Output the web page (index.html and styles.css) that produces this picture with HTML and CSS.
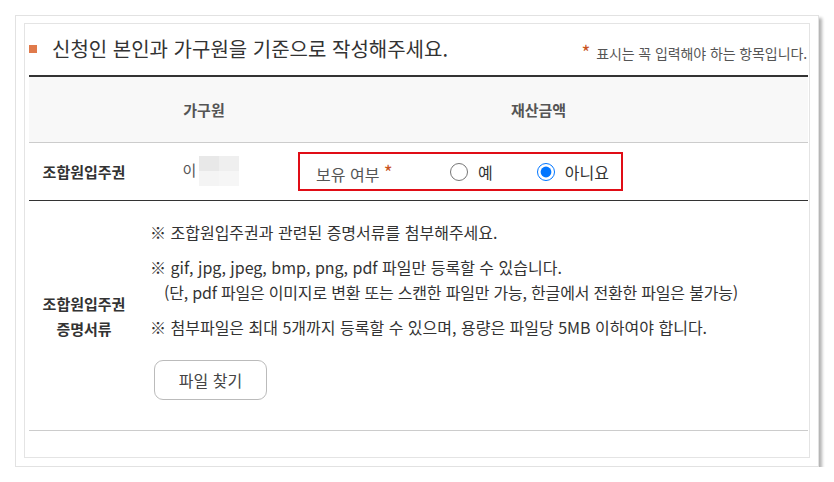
FILE: index.html
```html
<!DOCTYPE html>
<html lang="ko">
<head>
  <meta charset="UTF-8" />
  <title>조합원입주권</title>
  <link rel="stylesheet" href="styles.css">
</head>
<body>
  <div class="frame">
    <div class="panel">
      <div class="title-bar">
        <h2 class="title"><span class="bullet"></span>신청인 본인과 가구원을 기준으로 작성해주세요.</h2>
        <p class="note"><span class="star">*</span> 표시는 꼭 입력해야 하는 항목입니다.</p>
      </div>

      <table class="asset-table">
        <thead>
          <tr>
            <th class="col-label"></th>
            <th class="col-member">가구원</th>
            <th>재산금액</th>
          </tr>
        </thead>
        <tbody>
          <tr class="row-own">
            <th class="row-label">조합원입주권</th>
            <td class="member">이<span class="mosaic"><i></i><i></i><i></i><i></i></span></td>
            <td>
              <div class="own-box">
                <span class="own-label">보유 여부 <span class="star">*</span></span>
                <label class="radio"><input type="radio" name="own"> 예</label>
                <label class="radio"><input type="radio" name="own" checked> 아니요</label>
              </div>
            </td>
          </tr>
          <tr class="row-doc">
            <th class="row-label">조합원입주권<br>증명서류</th>
            <td colspan="2" class="doc">
              <p>※ 조합원입주권과 관련된 증명서류를 첨부해주세요.</p>
              <p>※ gif, jpg, jpeg, bmp, png, pdf 파일만 등록할 수 있습니다.<br><span class="indent">(단, pdf 파일은 이미지로 변환 또는 스캔한 파일만 가능, 한글에서 전환한 파일은 불가능)</span></p>
              <p>※ 첨부파일은 최대 5개까지 등록할 수 있으며, 용량은 파일당 5MB 이하여야 합니다.</p>
              <button type="button" class="file-btn">파일 찾기</button>
            </td>
          </tr>
        </tbody>
      </table>
    </div>
  </div>
</body>
</html>
```

FILE: styles.css
```css
body {
  margin: 0;
  background: #fff;
  font-family: "Noto Sans CJK KR", "Noto Sans", sans-serif;
  color: #333;
}

.frame {
  margin: 15px 0 0 15px;
  width: 786px;
  height: 435px;
  padding: 7px 8px 8px 8px;
  border: 1px solid #e2e2e2;
  box-shadow: 3px 3px 3px rgba(0,0,0,0.3);
  background: #fff;
}

.panel {
  height: 433px;
  border: 1px solid #e4e4e4;
  padding: 0 1px 0 4px;
}

.title-bar {
  display: flex;
  justify-content: space-between;
  align-items: flex-end;
  height: 51px;
}

.title {
  margin: 0 0 13px 0;
  display: flex;
  align-items: center;
  font-size: 20px;
  font-weight: 400;
  color: #333;
  line-height: 26px;
}

.bullet {
  display: inline-block;
  width: 8px;
  height: 8px;
  background: #e07a4b;
  margin-right: 15px;
}

.note {
  margin: 0 1px 12px 0;
  font-size: 14px;
  letter-spacing: -0.1px;
  color: #555;
  line-height: 20px;
}

.note .star {
  font-size: 19px;
  vertical-align: -1px;
  margin-right: 2px;
}

.star {
  color: #c9531e;
  font-size: 16px;
}

.asset-table {
  width: 100%;
  border-collapse: collapse;
  border-top: 2px solid #333;
  font-size: 15px;
}

.asset-table thead th {
  height: 65px;
  background: #f8f8f8;
  font-weight: 700;
  color: #555;
  border-bottom: 1px solid #ccc;
  padding: 0;
}

.col-label {
  width: 110px;
}

.col-member {
  width: 130px;
}

.row-own th, .row-own td {
  height: 57px;
  padding: 0;
  border-bottom: 1px solid #333;
}

.row-label {
  font-weight: 700;
  color: #333;
  line-height: 25px;
}

.member {
  text-align: center;
  color: #555;
  padding-left: 14px !important;
}

.mosaic {
  display: inline-grid;
  grid-template-columns: 20px 20px;
  grid-template-rows: 15px 15px;
  vertical-align: middle;
  margin-left: 3px;
  margin-top: -2px;
}

.mosaic i:nth-child(1) { background: #e8e8e8; }
.mosaic i:nth-child(2) { background: #efefef; }
.mosaic i:nth-child(3) { background: #f4f4f4; }
.mosaic i:nth-child(4) { background: #f6f6f6; }

.own-box {
  display: flex;
  align-items: center;
  width: 321px;
  height: 35px;
  margin-left: 29px;
  border: 2px solid #e00d16;
  color: #555;
  font-size: 16px;
  white-space: nowrap;
}

.own-label {
  flex: none;
  margin-left: 16px;
  width: 134px;
}

.own-label .star {
  font-size: 19px;
  vertical-align: 1px;
}

.radio {
  flex: none;
  display: flex;
  align-items: center;
  color: #333;
  margin-right: 44px;
}

.radio input {
  width: 18px;
  height: 18px;
  margin: 0 10px 0 0;
}

.row-doc th, .row-doc td {
  border-bottom: 1px solid #ccc;
}

.doc {
  padding: 19px 0 30px 11px;
  color: #333;
  font-size: 16px;
}

.doc p {
  margin: 0 0 10px 0;
  line-height: 25px;
}

.indent {
  padding-left: 14px;
  letter-spacing: -0.2px;
}

.file-btn {
  margin: 10px 0 0 4px;
  width: 113px;
  height: 40px;
  background: #fff;
  border: 1px solid #bbb;
  border-radius: 9px;
  font-family: inherit;
  font-size: 16px;
  color: #444;
}
```
